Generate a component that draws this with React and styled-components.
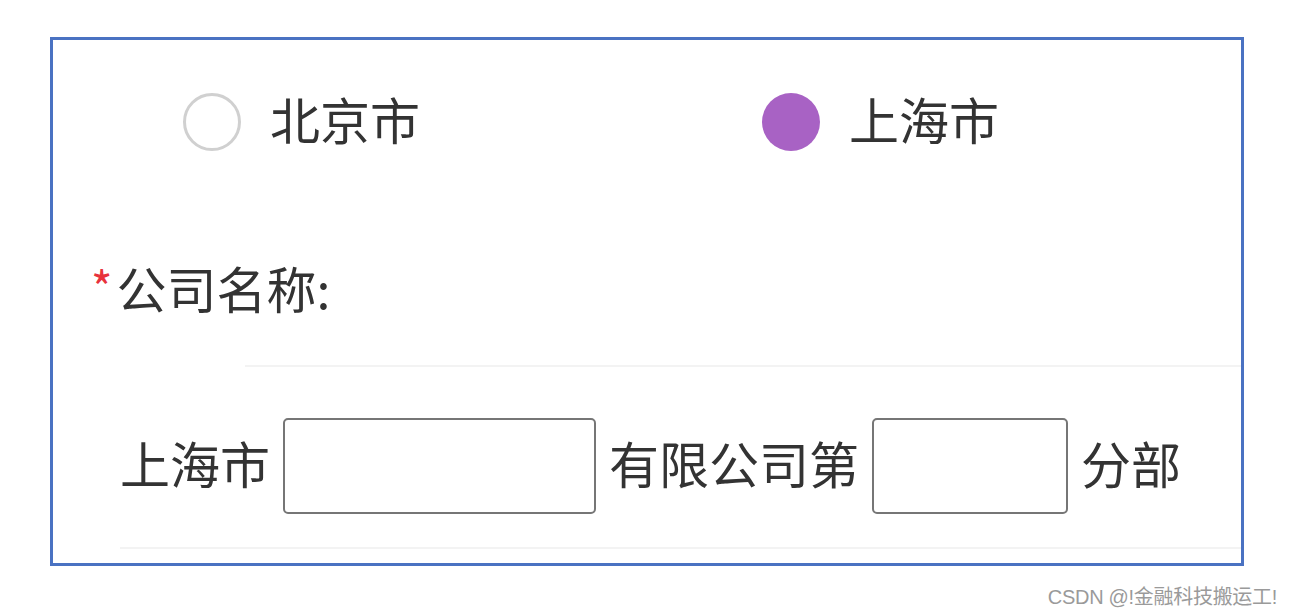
import React, { useState } from 'react';
import styled, { createGlobalStyle } from 'styled-components';

const GlobalStyle = createGlobalStyle`
  html, body {
    margin: 0;
    padding: 0;
    background: #fff;
  }
  body {
    font-family: 'Noto Sans CJK SC', 'Noto Sans', sans-serif;
    color: #333;
  }
`;

const Page = styled.div`
  width: 1290px;
  height: 614px;
  padding: 37px 0 0 50px;
  box-sizing: border-box;
`;

const Frame = styled.div`
  width: 1194px;
  height: 529px;
  box-sizing: border-box;
  border: 3px solid #4a72c2;
  display: flex;
  flex-direction: column;
`;

const RadioRow = styled.div`
  height: 164px;
  display: flex;
  align-items: center;
  padding-left: 130px;
`;

const RadioItem = styled.label`
  display: flex;
  align-items: center;
  gap: 29px;
  width: ${(p) => p.width || 'auto'};
  cursor: pointer;
`;

const Circle = styled.span`
  width: 58px;
  height: 58px;
  box-sizing: border-box;
  border-radius: 50%;
  border: ${(p) => (p.checked ? 'none' : '3px solid #d0d0d0')};
  background: ${(p) => (p.checked ? '#a862c4' : '#fff')};
  flex-shrink: 0;
`;

const BigText = styled.span`
  font-size: 50px;
  line-height: 60px;
  padding-bottom: 8px;
  color: #333;
  white-space: nowrap;
`;

const LabelRow = styled.div`
  margin-top: 57px;
  height: 60px;
  display: flex;
  align-items: center;
  padding-left: 38px;
`;

const Star = styled.span`
  color: #e8323c;
  font-size: 46px;
  line-height: 1;
  margin-right: 4px;
  align-self: flex-start;
  margin-top: 2px;
`;

const Divider = styled.div`
  height: 2px;
  background: #f3f3f3;
  margin-top: ${(p) => p.top}px;
  margin-left: ${(p) => p.left}px;
`;

const InputRow = styled.div`
  margin-top: 51px;
  height: 96px;
  display: flex;
  align-items: center;
  padding-left: 67px;
  gap: 13px;
`;

const Box = styled.input`
  width: ${(p) => p.w}px;
  height: 96px;
  box-sizing: border-box;
  border: 2px solid #767676;
  border-radius: 5px;
  font-size: 30px;
  padding: 0 10px;
  outline: none;
  background: #fff;
`;

const Watermark = styled.div`
  width: 1277px;
  margin-top: 15px;
  margin-left: -50px;
  text-align: right;
  font-family: 'Liberation Sans', 'Noto Sans CJK SC', sans-serif;
  font-size: 20px;
  color: #9a9a9a;
  letter-spacing: -0.3px;
`;

const App = () => {
  const [city, setCity] = useState('上海市');

  return (
    <>
      <GlobalStyle />
      <Page>
        <Frame>
          <RadioRow>
            <RadioItem width="579px" onClick={() => setCity('北京市')}>
              <Circle checked={city === '北京市'} />
              <BigText>北京市</BigText>
            </RadioItem>
            <RadioItem onClick={() => setCity('上海市')}>
              <Circle checked={city === '上海市'} />
              <BigText>上海市</BigText>
            </RadioItem>
          </RadioRow>

          <LabelRow>
            <Star>*</Star>
            <BigText>公司名称:</BigText>
          </LabelRow>

          <Divider top={44} left={192} />

          <InputRow>
            <BigText>上海市</BigText>
            <Box w={313} />
            <BigText>有限公司第</BigText>
            <Box w={196} />
            <BigText>分部</BigText>
          </InputRow>

          <Divider top={33} left={67} />
        </Frame>
        <Watermark>CSDN @!金融科技搬运工!</Watermark>
      </Page>
    </>
  );
};

export default App;
